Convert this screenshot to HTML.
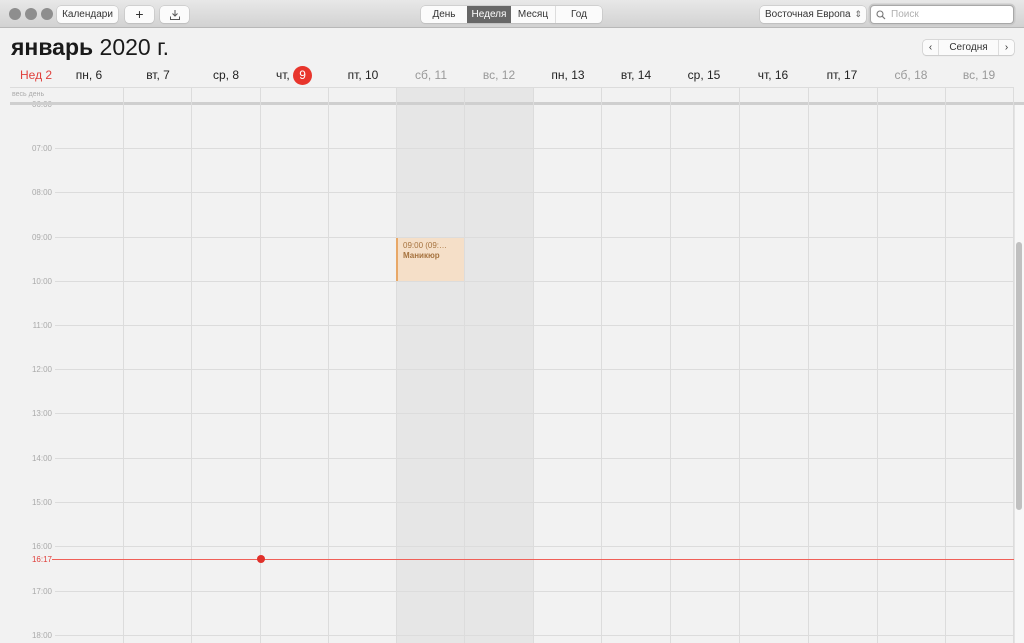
<!DOCTYPE html>
<html><head><meta charset="utf-8"><style>
*{margin:0;padding:0;box-sizing:border-box}
body{width:1024px;height:643px;overflow:hidden;background:#f2f2f2;font-family:"Liberation Sans",sans-serif;position:relative}
.a{position:absolute}
.tb{left:0;top:0;width:1024px;height:28px;background:linear-gradient(#e8e8e8,#d2d2d2);border-bottom:1px solid #b8b8b8}
.dot{width:12px;height:12px;border-radius:50%;background:#8e8e8e;top:8px}
.btn{top:6px;height:17px;background:#fbfbfb;border-radius:4px;box-shadow:0 0 0 0.5px #bdbdbd,0 1px 1px rgba(0,0,0,.1);font-size:10px;color:#333;text-align:center;line-height:17px;white-space:nowrap}
.hl{left:55px;width:959px;height:1px;background:#dcdcdc}
.vl{top:87px;width:1px;height:556px;background:#dcdcdc}
.hr{left:14px;width:38px;text-align:right;font-size:8px;color:#aaa}
.dh{top:68px;width:68px;text-align:center;font-size:12px;color:#222}
</style></head><body>
<div class="a tb"></div>
<div class="a dot" style="left:9px"></div><div class="a dot" style="left:25px"></div><div class="a dot" style="left:41px"></div>
<div class="a btn" style="left:57px;width:61px">Календари</div>
<div class="a btn" style="left:125px;width:29px;font-size:14px">+</div>
<div class="a btn" style="left:160px;width:29px"><svg width="12" height="12" viewBox="0 0 12 12" style="margin-top:3px"><path d="M6 1v6M3.5 4.5L6 7l2.5-2.5M1.5 7.5v3h9v-3" fill="none" stroke="#555" stroke-width="1"/></svg></div>
<div class="a btn" style="left:421px;width:181px;background:#fbfbfb"></div>
<div class="a" style="left:421px;top:6px;width:46px;height:17px;font-size:10px;line-height:17px;text-align:center;color:#333">День</div>
<div class="a" style="left:467px;top:6px;width:44px;height:17px;font-size:10px;line-height:17px;text-align:center;color:#fff;background:#676767">Неделя</div>
<div class="a" style="left:511px;top:6px;width:45px;height:17px;font-size:10px;line-height:17px;text-align:center;color:#333;border-right:1px solid #ddd">Месяц</div>
<div class="a" style="left:556px;top:6px;width:46px;height:17px;font-size:10px;line-height:17px;text-align:center;color:#333">Год</div>
<div class="a btn" style="left:760px;width:106px;text-align:left;padding-left:5px">Восточная Европа <span style="font-size:9px;color:#666;position:absolute;right:4px">⇕</span></div>
<div class="a" style="left:870px;top:5px;width:144px;height:19px;background:#fff;border:1px solid #a8a8a8;border-radius:4px;box-shadow:0 0 0 1.5px #c9c9c9;font-size:10px;color:#b0b0b0;line-height:17px;padding-left:20px">Поиск<svg class="a" style="left:5px;top:4px" width="10" height="10" viewBox="0 0 10 10"><circle cx="4" cy="4" r="3" fill="none" stroke="#777" stroke-width="1.1"/><path d="M6.2 6.2L9 9" stroke="#777" stroke-width="1.2"/></svg></div>

<div class="a" style="left:11px;top:34px;font-size:23px;color:#1a1a1a;white-space:nowrap"><b>январь</b> 2020 г.</div>
<div class="a btn" style="left:923px;top:40px;width:91px;height:15px;line-height:15px;font-size:10px;border-radius:3px"><span style="position:absolute;left:0;width:16px;border-right:1px solid #ddd">‹</span>Сегодня<span style="position:absolute;right:0;width:16px;border-left:1px solid #ddd">›</span></div>

<div class="a" style="left:20px;top:68px;font-size:12px;color:#e0403c">Нед 2</div>
<div class="a dh" style="left:55px">пн, 6</div>
<div class="a dh" style="left:124px">вт, 7</div>
<div class="a dh" style="left:192px">ср, 8</div>
<div class="a dh" style="left:260px">чт, <span style="display:inline-block;width:19px;height:19px;border-radius:50%;background:#e8352c;color:#fff;line-height:19px;margin-top:-3px">9</span></div>
<div class="a dh" style="left:329px">пт, 10</div>
<div class="a dh" style="left:397px;color:#999">сб, 11</div>
<div class="a dh" style="left:465px;color:#999">вс, 12</div>
<div class="a dh" style="left:534px">пн, 13</div>
<div class="a dh" style="left:602px">вт, 14</div>
<div class="a dh" style="left:670px">ср, 15</div>
<div class="a dh" style="left:739px">чт, 16</div>
<div class="a dh" style="left:808px">пт, 17</div>
<div class="a dh" style="left:877px;color:#999">сб, 18</div>
<div class="a dh" style="left:945px;color:#999">вс, 19</div>

<div class="a" style="left:396px;top:87px;width:137px;height:556px;background:#e6e6e6"></div>
<div class="a" style="left:12px;top:91px;font-size:7px;color:#aaa">весь день</div>
<div class="a" style="left:10px;top:87px;width:1004px;height:1px;background:#dcdcdc"></div>
<div class="a hr" style="top:100px">06:00</div>
<div class="a" style="left:10px;top:102px;width:1014px;height:3px;background:#cfcfcf"></div>

<div class="a vl" style="left:123px"></div><div class="a vl" style="left:191px"></div><div class="a vl" style="left:260px"></div><div class="a vl" style="left:328px"></div><div class="a vl" style="left:396px"></div><div class="a vl" style="left:464px"></div><div class="a vl" style="left:533px"></div><div class="a vl" style="left:601px"></div><div class="a vl" style="left:670px"></div><div class="a vl" style="left:739px"></div><div class="a vl" style="left:808px"></div><div class="a vl" style="left:877px"></div><div class="a vl" style="left:945px"></div><div class="a vl" style="left:1013px"></div>

<div class="a hl" style="top:148px"></div><div class="a hr" style="top:144px">07:00</div>
<div class="a hl" style="top:192px"></div><div class="a hr" style="top:188px">08:00</div>
<div class="a hl" style="top:237px"></div><div class="a hr" style="top:233px">09:00</div>
<div class="a hl" style="top:281px"></div><div class="a hr" style="top:277px">10:00</div>
<div class="a hl" style="top:325px"></div><div class="a hr" style="top:321px">11:00</div>
<div class="a hl" style="top:369px"></div><div class="a hr" style="top:365px">12:00</div>
<div class="a hl" style="top:413px"></div><div class="a hr" style="top:409px">13:00</div>
<div class="a hl" style="top:458px"></div><div class="a hr" style="top:454px">14:00</div>
<div class="a hl" style="top:502px"></div><div class="a hr" style="top:498px">15:00</div>
<div class="a hl" style="top:546px"></div><div class="a hr" style="top:542px">16:00</div>
<div class="a hl" style="top:591px"></div><div class="a hr" style="top:587px">17:00</div>
<div class="a hl" style="top:635px"></div><div class="a hr" style="top:631px">18:00</div>

<div class="a" style="left:396px;top:238px;width:68px;height:43px;background:#f5dfc8;border-left:2px solid #e8a868;font-size:8px;color:#a6733f;padding:3px 0 0 5px;line-height:10px">09:00 (09:…<br><b>Маникюр</b></div>

<div class="a" style="left:52px;top:559px;width:962px;height:1px;background:#f06058"></div>
<div class="a" style="left:14px;top:555px;width:38px;text-align:right;font-size:8px;color:#e0403c">16:17</div>
<div class="a" style="left:257px;top:555px;width:8px;height:8px;border-radius:50%;background:#e0302a"></div>

<div class="a" style="left:1014px;top:105px;width:10px;height:538px;background:#f7f7f7;border-left:1px solid #e4e4e4"></div>
<div class="a" style="left:1016px;top:242px;width:6px;height:268px;background:#c0c0c0;border-radius:3px"></div>
</body></html>
